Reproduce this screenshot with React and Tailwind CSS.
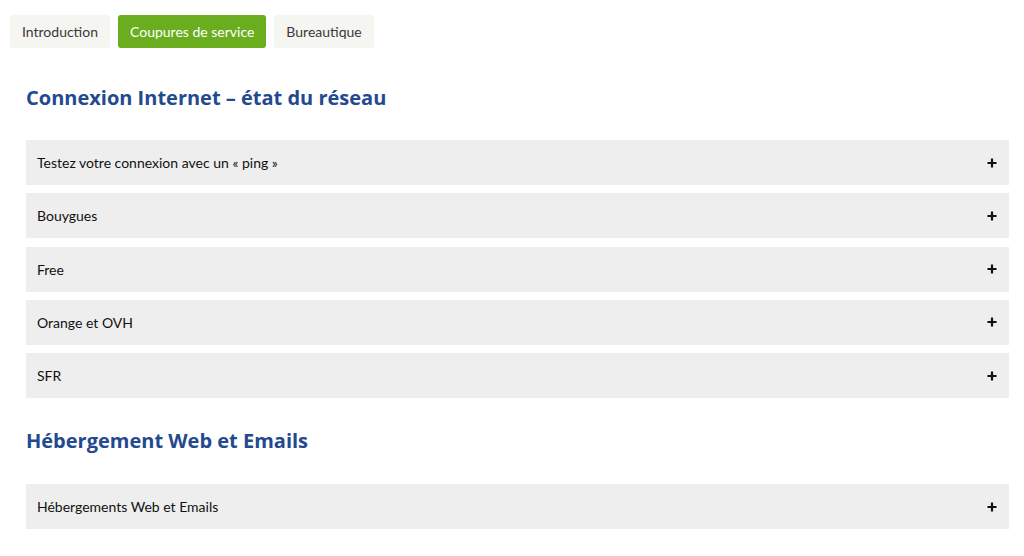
const tabs = [
  { label: 'Introduction', active: false },
  { label: 'Coupures de service', active: true },
  { label: 'Bureautique', active: false },
]

const sections = [
  {
    title: 'Connexion Internet – état du réseau',
    items: ['Testez votre connexion avec un « ping »', 'Bouygues', 'Free', 'Orange et OVH', 'SFR'],
  },
  {
    title: 'Hébergement Web et Emails',
    items: ['Hébergements Web et Emails'],
  },
]

function PlusIcon() {
  return (
    <svg width="10" height="10" viewBox="0 0 10 10" className="shrink-0">
      <path d="M5 0.5v9M0.5 5h9" stroke="#111" strokeWidth="2.2" />
    </svg>
  )
}

export default function App() {
  return (
    <div className="w-[1024px] h-[556px] overflow-hidden bg-white font-['Lato',sans-serif]">
      <div className="flex gap-2 pl-[10px] pt-[15px]">
        {tabs.map((t) => (
          <div
            key={t.label}
            className={
              t.active
                ? 'h-[33px] px-[12px] flex items-center rounded-[3px] bg-[#6aae1f] text-white text-[14px]'
                : 'h-[33px] px-[12px] flex items-center rounded-[3px] bg-[#f5f5f2] text-[#3a3a3a] text-[14px]'
            }
          >
            {t.label}
          </div>
        ))}
      </div>

      <div className="pl-[26px] pr-[15px]">
        {sections.map((s, i) => (
          <div key={s.title} className={i === 0 ? 'pt-[37px]' : 'pt-[30px]'}>
            <h2 className="text-[20px] leading-[26px] font-bold text-[#23498f] font-['Open_Sans',sans-serif]">
              {s.title}
            </h2>
            <div className={i === 0 ? 'mt-[29px] flex flex-col gap-[8.25px]' : 'mt-[30px] flex flex-col gap-[8.25px]'}>
              {s.items.map((it) => (
                <div
                  key={it}
                  className="h-[45px] bg-[#eeeeee] flex items-center justify-between pl-[11px] pr-[12px] text-[14px] text-[#111]"
                >
                  <span>{it}</span>
                  <PlusIcon />
                </div>
              ))}
            </div>
          </div>
        ))}
      </div>
    </div>
  )
}
